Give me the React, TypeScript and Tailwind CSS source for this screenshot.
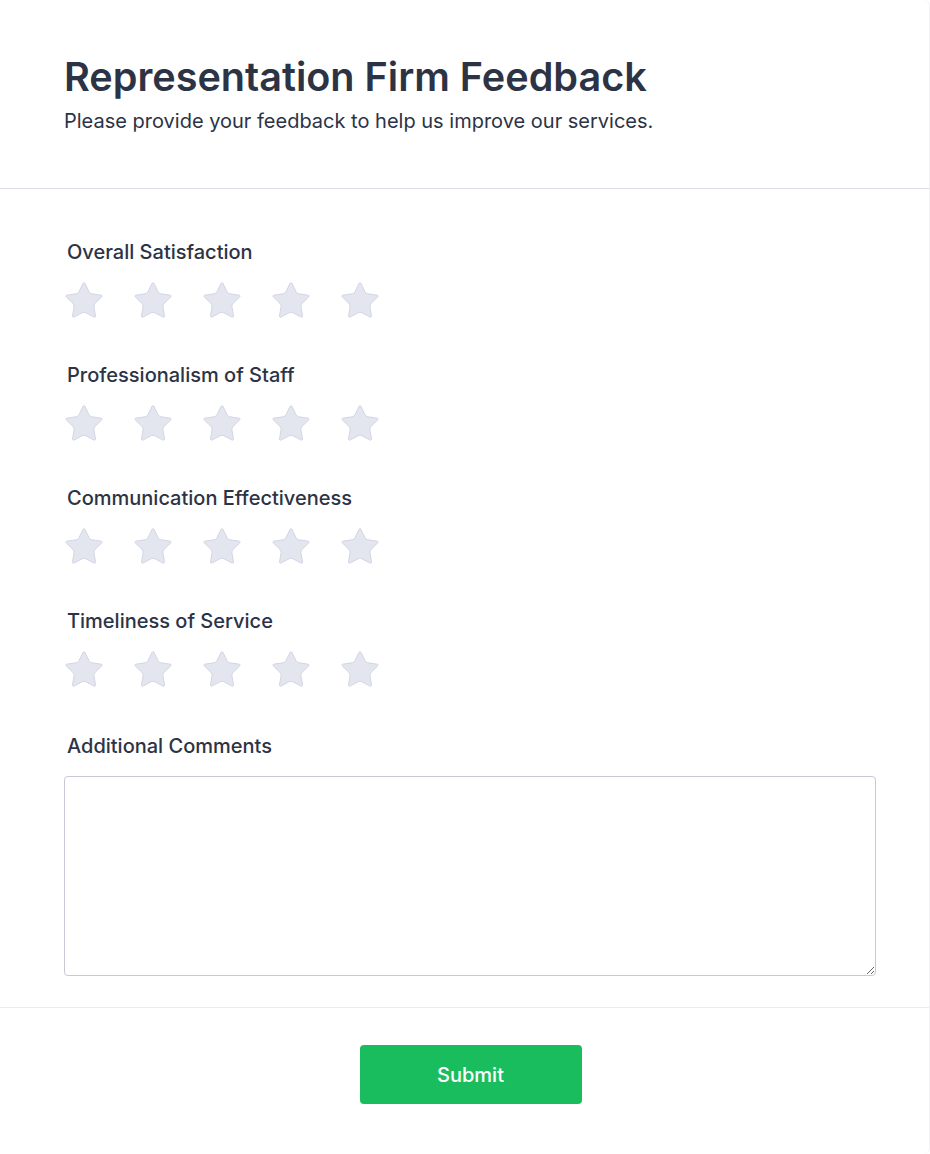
import React from "react";

const questions = [
  "Overall Satisfaction",
  "Professionalism of Staff",
  "Communication Effectiveness",
  "Timeliness of Service",
];

const Star: React.FC = () => (
  <button type="button" className="block h-[36px] w-[38px] p-0">
    <svg
      viewBox="1.6 1.6 20.8 19.9"
      width={38}
      height={36}
      className="block"
    >
      <path
        d="M11.525 2.295a.53.53 0 0 1 .95 0l2.31 4.679a2.123 2.123 0 0 0 1.595 1.16l5.166.756a.53.53 0 0 1 .294.904l-3.736 3.638a2.123 2.123 0 0 0-.611 1.878l.882 5.14a.53.53 0 0 1-.771.56l-4.618-2.428a2.122 2.122 0 0 0-1.973 0L6.396 21.01a.53.53 0 0 1-.77-.56l.881-5.139a2.122 2.122 0 0 0-.611-1.879L2.16 9.795a.53.53 0 0 1 .294-.906l5.165-.755a2.122 2.122 0 0 0 1.597-1.16z"
        fill="#e3e5ef"
        stroke="#d2d5e3"
        strokeWidth={0.55}
        strokeLinejoin="round"
      />
    </svg>
  </button>
);

const Rating: React.FC<{ label: string }> = ({ label }) => (
  <div className="flex flex-col">
    <label className="pl-[3px] text-xl leading-7 font-medium text-[#2c3345]">
      {label}
    </label>
    <div className="mt-4 flex gap-[31px] pl-[1px]">
      {[1, 2, 3, 4, 5].map((n) => (
        <Star key={n} />
      ))}
    </div>
  </div>
);

export default function App() {
  return (
    <div
      className="min-h-[1154px] bg-white"
      style={{ fontFamily: "Inter, 'Noto Sans', sans-serif" }}
    >
      <div className="rounded-r-[6px] border-r border-[#f1f1f4] bg-white">
        <header className="border-b border-[#dcdcea] px-16 pt-[53px] pb-[53px]">
          <h1 className="text-[39.6px] leading-[48px] font-semibold text-[#2c3345]">
            Representation Firm Feedback
          </h1>
          <p className="mt-[6px] text-xl leading-7 font-normal text-[#2c3345]">
            Please provide your feedback to help us improve our services.
          </p>
        </header>

        <section className="flex flex-col gap-[43px] border-b border-[#ececf3] pt-[49px] pr-[53px] pb-[31px] pl-16">
          {questions.map((q) => (
            <Rating key={q} label={q} />
          ))}
          <div className="mt-[2px] flex flex-col">
            <label className="pl-[3px] text-xl leading-7 font-medium text-[#2c3345]">
              Additional Comments
            </label>
            <textarea className="mt-4 h-[200px] w-full rounded-[4px] border border-[#c8c8d8] bg-white p-3 text-base" />
          </div>
        </section>

        <footer className="flex justify-center pt-[37px] pb-[50px] pl-3">
          <button
            type="button"
            className="h-[59px] w-[222px] rounded-[4px] bg-[#19bd5d] text-xl font-medium text-white"
          >
            Submit
          </button>
        </footer>
      </div>
    </div>
  );
}
